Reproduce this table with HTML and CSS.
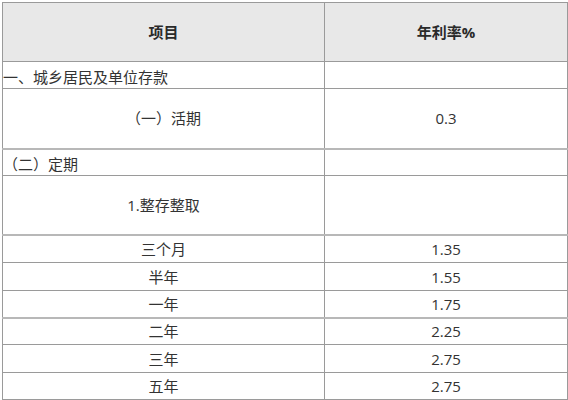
FILE: index.html
```html
<!DOCTYPE html>
<html lang="zh">
<head>
<meta charset="utf-8">
<link rel="stylesheet" href="styles.css">
</head>
<body>
<table class="rates">
  <colgroup><col class="c1"><col class="c2"></colgroup>
  <tr class="head h59"><th>项目</th><th>年利率%</th></tr>
  <tr class="h27"><td class="left">一、城乡居民及单位存款</td><td></td></tr>
  <tr class="h60"><td>（一）活期</td><td>0.3</td></tr>
  <tr class="h27 thick"><td class="left">（二）定期</td><td></td></tr>
  <tr class="h59"><td>1.整存整取</td><td></td></tr>
  <tr class="h28 thick"><td>三个月</td><td>1.35</td></tr>
  <tr class="h28"><td>半年</td><td>1.55</td></tr>
  <tr class="h27"><td>一年</td><td>1.75</td></tr>
  <tr class="h27 thick"><td>二年</td><td>2.25</td></tr>
  <tr class="h28"><td>三年</td><td>2.75</td></tr>
  <tr class="h27"><td>五年</td><td>2.75</td></tr>
</table>
</body>
</html>
```
FILE: styles.css
```css
html, body {
  margin: 0;
  padding: 0;
  background: #ffffff;
}
body {
  padding: 2px 0 0 2px;
  font-family: "Open Sans", "Noto Sans CJK SC", sans-serif;
  font-size: 15px;
  color: #333333;
}
.rates {
  border-collapse: collapse;
  width: 565px;
  table-layout: fixed;
}
.c1 { width: 322px; }
.c2 { width: 243px; }
.rates th, .rates td {
  border: 1px solid #9a9a9a;
  padding: 0;
  text-align: center;
  vertical-align: middle;
  line-height: 18px;
}
.rates td.left {
  text-align: left;
  padding-top: 3px;
}
.head th {
  background: #e8e8e8;
  font-weight: bold;
  color: #2a2a2a;
}
.thick td {
  border-top: 2px solid #b8b8b8;
}
.h59 { height: 59px; }
.h60 { height: 60px; }
.h27 { height: 27px; }
.h28 { height: 28px; }
```
